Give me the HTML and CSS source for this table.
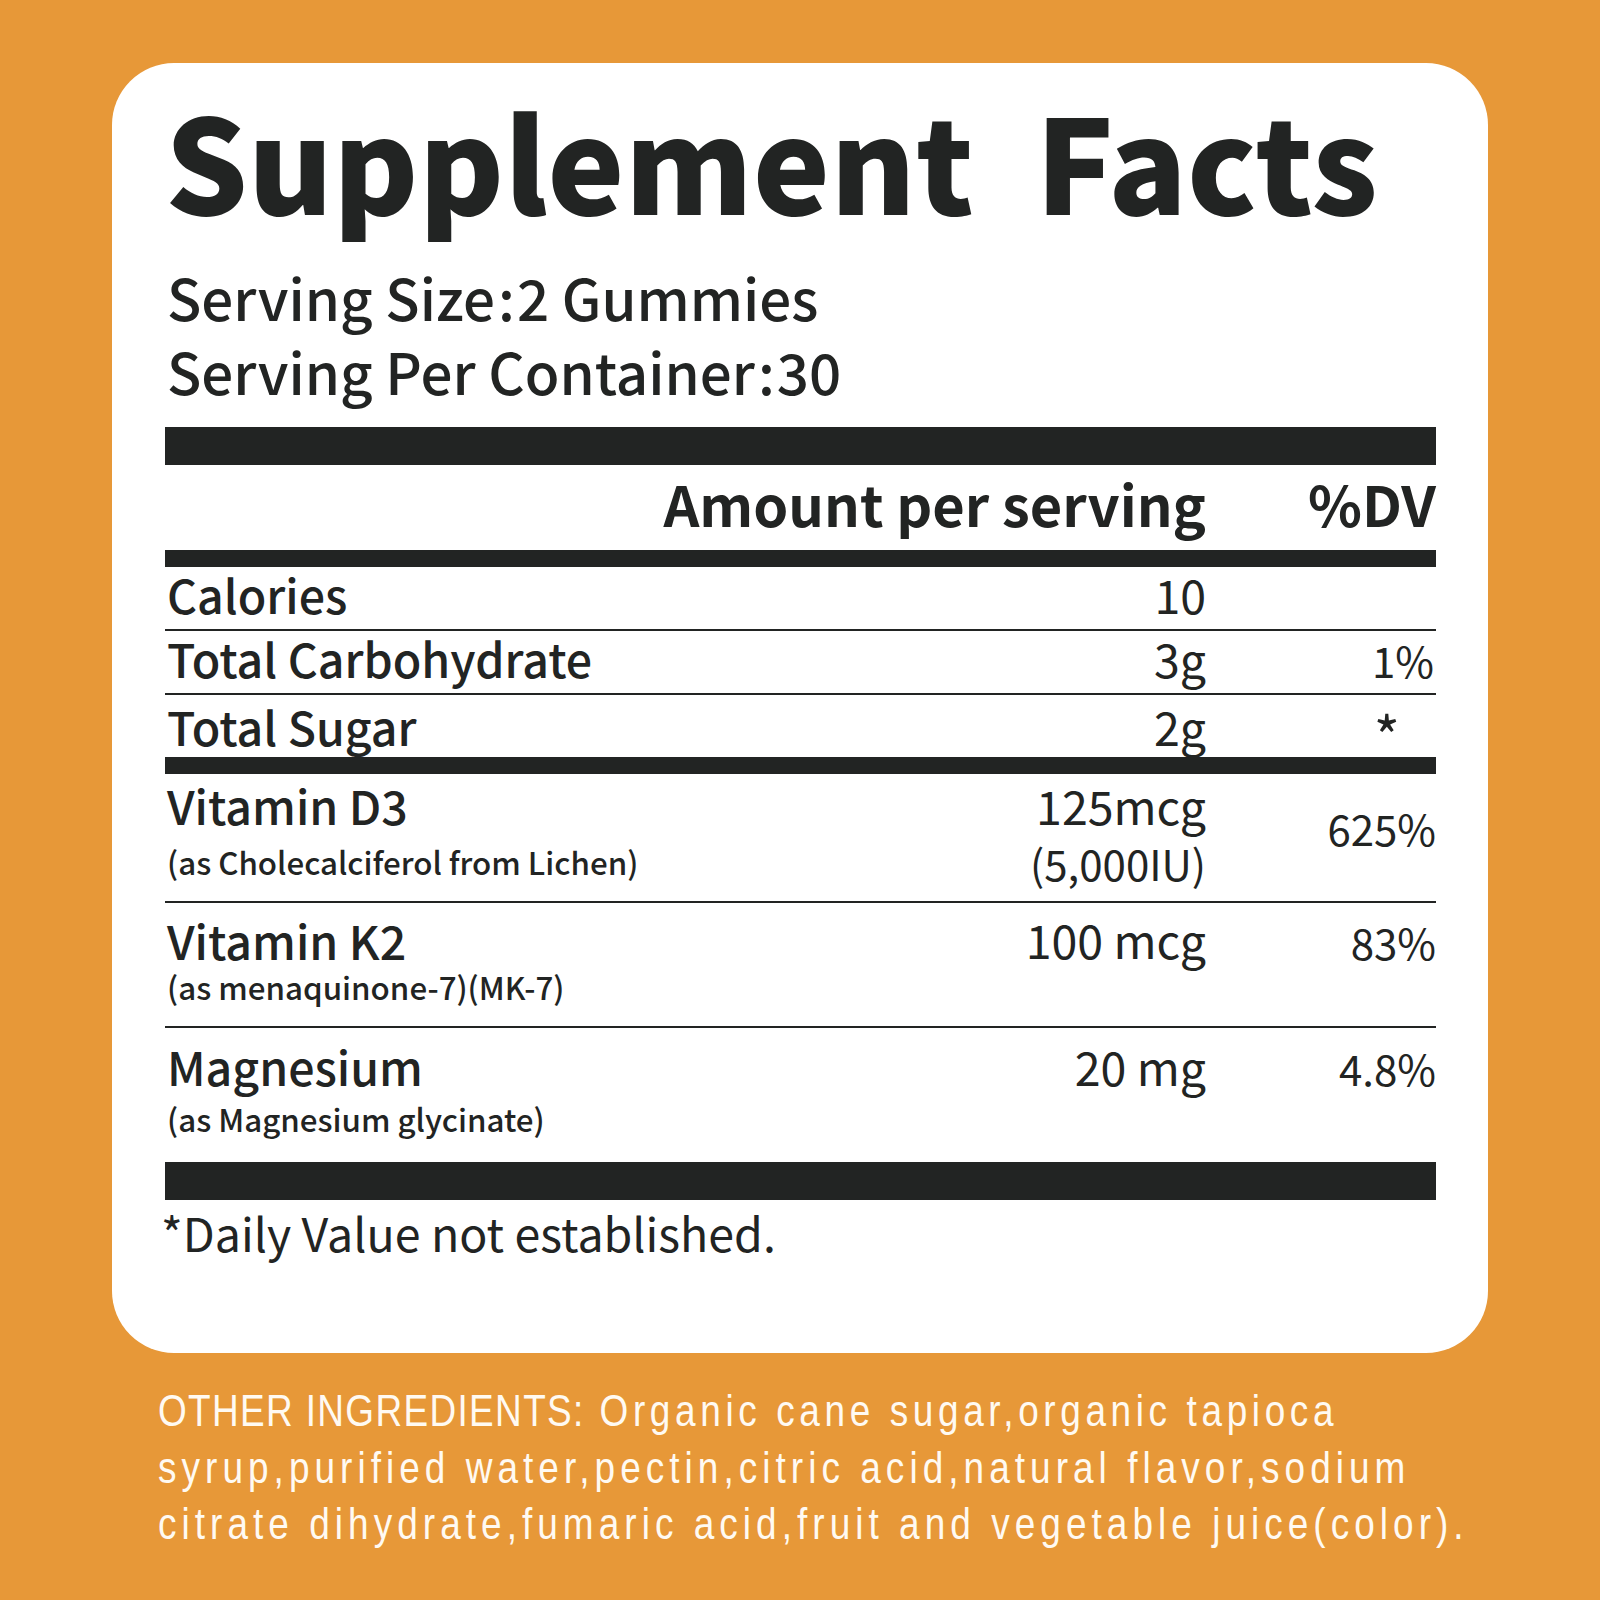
FILE: index.html
```html
<!DOCTYPE html>
<html lang="en">
<head>
<meta charset="utf-8">
<title>Supplement Facts</title>
<link rel="stylesheet" href="styles.css">
</head>
<body>
<div class="page">
  <div class="card">
    <h1 class="title">Supplement Facts</h1>
    <div class="serving">
      <p>Serving Size<span class="colon">:</span>2 Gummies</p>
      <p>Serving Per Container<span class="colon">:</span>30</p>
    </div>
    <div class="facts">
      <div class="bar bar-top"></div>
      <div class="head">
        <span class="h-amt">Amount per serving</span>
        <span class="h-dv">%DV</span>
      </div>
      <div class="bar bar-mid"></div>
      <div class="row simple">
        <span class="name">Calories</span><span class="amt">10</span><span class="dv"></span>
      </div>
      <div class="rule"></div>
      <div class="row simple">
        <span class="name">Total Carbohydrate</span><span class="amt">3g</span><span class="dv">1%</span>
      </div>
      <div class="rule"></div>
      <div class="row simple">
        <span class="name">Total Sugar</span><span class="amt">2g</span><span class="dv"><span class="star">*</span></span>
      </div>
      <div class="bar bar-mid"></div>
      <div class="row multi row-d3">
        <div class="name"><span class="main">Vitamin D3</span><span class="sub">(as Cholecalciferol from Lichen)</span></div>
        <div class="amt"><span class="main">125mcg</span><span class="sub2">(5,000IU)</span></div>
        <div class="dv">625%</div>
      </div>
      <div class="rule"></div>
      <div class="row multi row-k2">
        <div class="name"><span class="main">Vitamin K2</span><span class="sub">(as menaquinone-7)(MK-7)</span></div>
        <div class="amt"><span class="main">100 mcg</span></div>
        <div class="dv">83%</div>
      </div>
      <div class="rule"></div>
      <div class="row multi row-mg">
        <div class="name"><span class="main">Magnesium</span><span class="sub">(as Magnesium glycinate)</span></div>
        <div class="amt"><span class="main">20 mg</span></div>
        <div class="dv">4.8%</div>
      </div>
      <div class="bar bar-top"></div>
    </div>
    <p class="note">*Daily Value not established.</p>
  </div>
  <div class="ingredients">
    <span class="first"><span class="caps">OTHER INGREDIENTS:</span> Organic cane sugar,organic tapioca</span>
    <span>syrup,purified water,pectin,citric acid,natural flavor,sodium</span>
    <span>citrate dihydrate,fumaric acid,fruit and vegetable juice(color).</span>
  </div>
</div>
</body>
</html>
```

FILE: styles.css
```css
* { box-sizing: border-box; }
html, body { margin: 0; padding: 0; }
body {
  background: #e79838;
  font-family: "Noto Sans CJK SC", "Source Sans Pro", "Noto Sans", sans-serif;
  color: #222423;
}
.page {
  width: 1600px;
  height: 1600px;
  padding-top: 63px;
  display: flex;
  flex-direction: column;
  align-items: center;
}
.card {
  width: 1376px;
  height: 1290px;
  background: #ffffff;
  border-radius: 62px;
  padding: 31px 52px 0 53px;
  display: flex;
  flex-direction: column;
}
.title {
  margin: 0;
  font-size: 130px;
  line-height: 129px;
  font-weight: 900;
  word-spacing: 32px;
  white-space: nowrap;
}
.serving { margin-top: 36px; }
.serving p {
  margin: 0;
  font-size: 56.5px;
  line-height: 74px;
  font-weight: 500;
  padding-left: 2px;
}
.colon { margin: 0 2px 0 3px; }
.facts { margin-top: 20px; }
.bar { background: #222423; }
.bar-top { height: 38px; }
.bar-mid { height: 17px; }
.rule { height: 2px; background: #222423; }
.head {
  display: grid;
  grid-template-columns: 1fr 230px;
  height: 85px;
  font-size: 56px;
  font-weight: 700;
  line-height: 75px;
}
.h-amt { text-align: right; }
.h-dv { text-align: right; }
.row {
  display: grid;
  grid-template-columns: 1fr 320px 230px;
}
.row .amt { text-align: right; }
.row .dv { text-align: right; }
.name { font-weight: 500; }
.simple {
  height: 62px;
  align-items: baseline;
  line-height: 53px;
}
.simple .name { font-size: 46.5px; padding-left: 2px; }
.simple .amt { font-size: 46.5px; }
.simple .dv { font-size: 42px; padding-right: 2px; }
.star {
  display: inline-block;
  font-size: 56px;
  margin-right: 34px;
  transform: translateY(12px);
}
.multi .name, .multi .amt { display: flex; flex-direction: column; }
.multi .name { align-items: flex-start; }
.multi .amt { align-items: flex-end; }
.multi .name .main { font-size: 46.5px; line-height: 53px; padding-left: 2px; }
.multi .amt .main { font-size: 46.5px; line-height: 53px; }
.multi .sub { font-size: 31.3px; line-height: 38px; padding-left: 2px; }
.multi .sub2 { font-size: 42px; line-height: 48px; margin-top: 8px; }
.multi .dv { font-size: 42px; line-height: 50px; }
.row-d3 { height: 127px; }
.row-d3 .name, .row-d3 .amt { padding-top: 4px; }
.row-d3 .sub { margin-top: 12px; }
.row-d3 .dv { padding-top: 29px; }
.row-k2 { height: 123px; }
.row-k2 .name { padding-top: 10px; }
.row-k2 .amt { padding-top: 9px; }
.row-k2 .sub { margin-top: 2px; }
.row-k2 .dv { padding-top: 14px; }
.row-mg { height: 134px; }
.row-mg .name, .row-mg .amt { padding-top: 11px; }
.row-mg .sub { margin-top: 8px; }
.row-mg .dv { padding-top: 15px; }
.note {
  margin: 8px 0 0 -4px;
  font-size: 46.5px;
  line-height: 47px;
}
.ingredients {
  width: 1376px;
  margin: 30px 0 0 0;
  padding-left: 46px;
  font-family: "Liberation Sans", Arial, sans-serif;
  font-size: 44px;
  line-height: 56.5px;
  letter-spacing: 6px;
  color: #fffaf2;
}
.ingredients > span {
  display: block;
  white-space: nowrap;
  transform: scaleX(0.84);
  transform-origin: 0 50%;
}
.ingredients .first { letter-spacing: 5.5px; }
.ingredients .caps { letter-spacing: 1.6px; }
```
